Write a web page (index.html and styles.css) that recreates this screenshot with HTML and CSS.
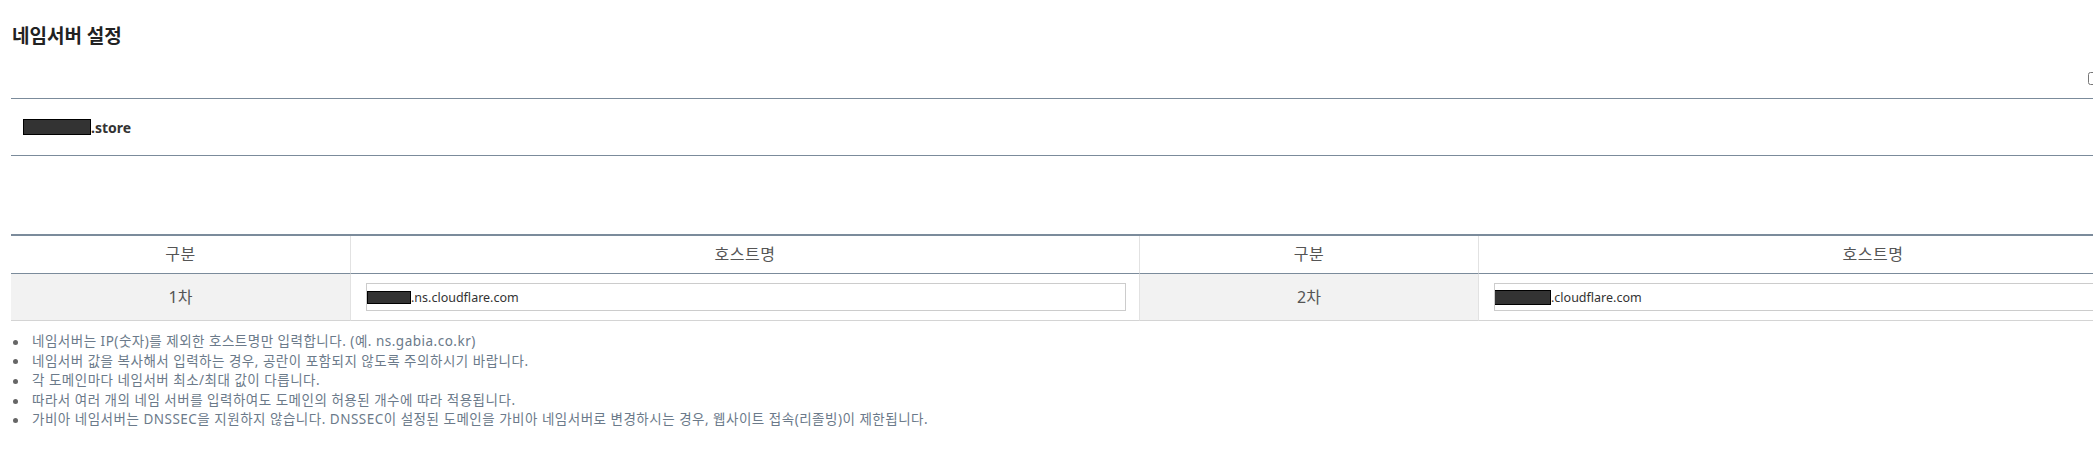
FILE: index.html
```html
<html>
<head><title>네임서버 설정</title>
<meta content="text/html;charset=utf-8" http-equiv="Content-Type" />
<link rel="stylesheet" href="styles.css">
</head>
<body>
<div class="page">
	<h2 class="title">네임서버 설정</h2>
	<div class="toolbar">
		<span class="apply"><input type="checkbox" aria-label="일괄 적용"></span>
	</div>
	<div class="domain"><span class="mask mask-domain"></span>.store</div>

	<table class="ns-table">
		<colgroup>
			<col class="c-label"><col class="c-host"><col class="c-label"><col class="c-host">
		</colgroup>
		<thead>
			<tr><th>구분</th><th>호스트명</th><th>구분</th><th>호스트명</th></tr>
		</thead>
		<tbody>
			<tr>
				<td class="label">1차</td>
				<td class="host"><div class="field"><span class="mask mask-ns1"></span>.ns.cloudflare.com</div></td>
				<td class="label">2차</td>
				<td class="host"><div class="field"><span class="mask mask-ns2"></span>.cloudflare.com</div></td>
			</tr>
		</tbody>
	</table>

	<ul class="notes">
		<li>네임서버는 IP(숫자)를 제외한 호스트명만 입력합니다. (예. ns.gabia.co.kr)</li>
		<li>네임서버 값을 복사해서 입력하는 경우, 공란이 포함되지 않도록 주의하시기 바랍니다.</li>
		<li>각 도메인마다 네임서버 최소/최대 값이 다릅니다.</li>
		<li>따라서 여러 개의 네임 서버를 입력하여도 도메인의 허용된 개수에 따라 적용됩니다.</li>
		<li>가비아 네임서버는 DNSSEC을 지원하지 않습니다. DNSSEC이 설정된 도메인을 가비아 네임서버로 변경하시는 경우, 웹사이트 접속(리졸빙)이 제한됩니다.</li>
	</ul>
</div>
</body>
</html>
```

FILE: styles.css
```css
body{
	margin:0;
	padding:0;
	background-color:#fff;
	overflow:hidden;
	font-family:"Noto Sans", "Noto Sans CJK KR", sans-serif;
	font-size:13px;
	color:#333;
}

.page{
	width:2256px;
	margin-left:11px;
}

.title{
	margin:0;
	padding:24px 0 0 1px;
	font-size:19px;
	line-height:24px;
	font-weight:bold;
	color:#222;
}

.toolbar{
	height:50px;
	box-sizing:border-box;
	padding-bottom:10px;
	display:flex;
	justify-content:flex-end;
	align-items:flex-end;
}

.apply{
	width:183px;
	height:19px;
	display:flex;
	align-items:center;
}

.apply input{
	margin:3px 6px 3px 4px;
}

.domain{
	height:56px;
	border-top:1px solid #7b8b9b;
	border-bottom:1px solid #7b8b9b;
	padding-left:12px;
	display:flex;
	align-items:center;
	font-size:14px;
	font-weight:bold;
	color:#333;
}

.mask{
	display:inline-block;
	box-sizing:border-box;
	background-color:#333;
	border:1px solid #000;
}

.mask-domain{
	width:68px;
	height:16px;
}

.mask-ns1{
	width:44px;
	height:13px;
}

.mask-ns2{
	width:57px;
	height:15px;
	margin-left:-1px;
}

.ns-table{
	margin-top:78px;
	width:2256px;
	table-layout:fixed;
	border-collapse:separate;
	border-spacing:0;
	border-top:2px solid #7b8b9b;
}

.c-label{
	width:339px;
}

.c-host{
	width:789px;
}

.ns-table th{
	padding:0;
	line-height:37px;
	font-weight:normal;
	color:#555;
	letter-spacing:0.5px;
	border-bottom:1px solid #7b8b9b;
	border-left:1px solid #e2e2e2;
	background-color:#fff;
}

.ns-table td{
	padding:9px 13px 9px 15px;
	border-bottom:1px solid #d4d4d4;
	border-left:1px solid #e2e2e2;
}

.ns-table th:first-child,
.ns-table td:first-child{
	border-left:0;
}

.ns-table td.label{
	padding:9px 0;
	line-height:28px;
	text-align:center;
	color:#555;
	background-color:#f2f2f2;
}

.field{
	height:28px;
	box-sizing:border-box;
	border:1px solid #ccc;
	background-color:#fff;
	display:flex;
	align-items:center;
	font-size:12.5px;
	color:#333;
	white-space:nowrap;
	overflow:hidden;
}

.notes{
	margin:11px 0 0;
	padding:0;
	list-style:none;
	font-size:13.5px;
	letter-spacing:0.5px;
	line-height:19.6px;
	color:#6b7a8a;
}

.notes li::before{
	content:"";
	display:inline-block;
	width:5px;
	height:5px;
	border-radius:50%;
	background-color:#666;
	margin:0 14px 0 2px;
	vertical-align:middle;
}
```
